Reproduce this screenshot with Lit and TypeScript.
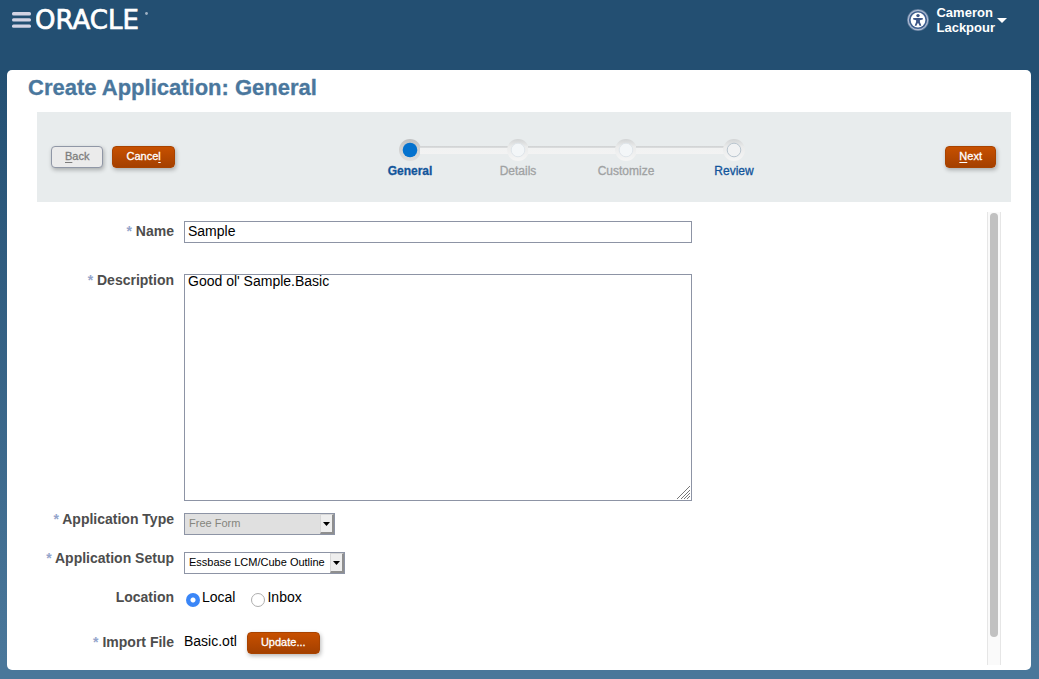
import { LitElement, html, css, svg, nothing } from "lit";
import { customElement, property } from "lit/decorators.js";

@customElement("train-step")
class TrainStep extends LitElement {
  static styles = css`
    :host {
      display: block;
      position: relative;
      width: 108px;
      text-align: center;
    }
    .line {
      position: absolute;
      top: 7px;
      left: 64px;
      width: 88px;
      height: 8px;
      background: linear-gradient(#cfd1d2, #dcdedf 25%, #f1f2f2 30%, #f3f3f3);
    }
    svg {
      display: block;
      margin: 0 auto;
    }
    .label {
      display: block;
      font-size: 12px;
      line-height: 16px;
      color: #a0a2a3;
      -webkit-text-stroke: 0.3px currentColor;
      text-decoration: none;
    }
    .current {
      color: #12559b;
      font-weight: bold;
    }
    .link {
      color: #12559b;
    }
  `;
  @property() label = "";
  @property() state = "off";
  @property({ type: Boolean }) last = false;

  render() {
    const on = this.state === "current";
    const open = this.state === "link";
    return html`
      ${this.last ? nothing : html`<div class="line"></div>`}
      <svg width="22" height="24" viewBox="0 0 22 24">
        <defs>
          <linearGradient id="ring" x1="0" y1="0" x2="0" y2="1">
            <stop offset="0" stop-color=${on ? "#bfc0c1" : "#d2d4d5"} />
            <stop offset="0.35" stop-color=${on ? "#cfcfcf" : "#eaebeb"} />
            <stop offset="1" stop-color=${on ? "#dedede" : "#f5f5f5"} />
          </linearGradient>
        </defs>
        <circle cx="11" cy="11" r="11" fill="url(#ring)" />
        ${on
          ? svg`<circle cx="11" cy="11" r="7.3" fill="#0572ce" />`
          : svg`<circle cx="11" cy="11" r="6.8" fill=${open ? "#f1f2f3" : "#f3f6f8"} stroke=${open ? "#b9c5cf" : "#dfe5ea"} />`}
      </svg>
      ${open
        ? html`<a class="label link" href="#review">${this.label}</a>`
        : html`<span class="label ${on ? "current" : ""}">${this.label}</span>`}
    `;
  }
}

@customElement("app-root")
class AppRoot extends LitElement {
  static styles = css`
    :host {
      display: flex;
      flex-direction: column;
      box-sizing: border-box;
      min-height: 100vh;
      padding: 0 8px 9px 7px;
      font-family: "Liberation Sans", Arial, sans-serif;
      font-size: 14px;
      line-height: 16px;
      color: #000;
      background: linear-gradient(#234f72 0, #234f72 70px, #4a779a 660px);
    }
    * {
      box-sizing: border-box;
    }
    header {
      display: flex;
      justify-content: space-between;
      height: 70px;
      padding: 5px 24px 0 5px;
    }
    .brand {
      display: flex;
      gap: 5px;
      height: 30px;
      align-items: center;
    }
    .plain {
      border: 0;
      padding: 0;
      background: none;
      color: #fff;
      font: inherit;
      display: flex;
      align-items: center;
    }
    .account {
      display: flex;
      height: 30px;
      gap: 6px;
      align-items: center;
    }
    .user {
      gap: 2px;
      font-size: 13px;
      font-weight: bold;
      line-height: 15px;
      text-align: left;
    }
    main {
      flex: 1;
      display: flex;
      flex-direction: column;
      background: #fff;
      border-radius: 5px;
      padding: 4px 20px 5px 21px;
    }
    h1 {
      margin: 0;
      font-size: 22px;
      line-height: 28px;
      color: #4a779d;
      -webkit-text-stroke: 0.3px currentColor;
    }
    .band {
      display: flex;
      justify-content: space-between;
      margin: 10px 0 0 9px;
      padding: 27px 15px 23px 14px;
      background: #e8eced;
    }
    .group {
      display: flex;
      gap: 9px;
    }
    .steps {
      display: flex;
      margin-left: 24px;
    }
    .btn {
      height: 22px;
      margin-top: 7px;
      padding: 0 13px 2px;
      border: 1px solid #a84300;
      border-radius: 4px;
      background: linear-gradient(#c75000, #a44000);
      box-shadow: 1px 2px 4px rgba(0, 0, 0, 0.28);
      color: #fff;
      font-family: inherit;
      font-size: 11px;
      line-height: 16px;
      -webkit-text-stroke: 0.3px currentColor;
    }
    .btn:disabled {
      border-color: #9097a6;
      background: #ebebeb;
      color: #7d7d7d;
    }
    .accel {
      text-decoration: underline;
      text-underline-offset: 2px;
    }
    .body {
      flex: 1;
      display: flex;
      justify-content: space-between;
      padding-top: 10px;
    }
    form {
      flex: 1;
      display: grid;
      grid-template-columns: 146px minmax(0, 508px);
      column-gap: 10px;
      align-content: start;
      padding-top: 9px;
    }
    .label {
      text-align: right;
      font-weight: bold;
      color: #4d4d4d;
      padding-top: 2px;
      white-space: nowrap;
    }
    .star {
      color: #94a5cb;
    }
    .text {
      display: block;
      width: 100%;
      border: 1px solid #8d94a5;
      border-radius: 0;
      padding: 0 3px 2px;
      margin: 0;
      font: inherit;
      color: #000;
      background: #fff;
      outline: none;
    }
    .line {
      height: 22px;
      margin-bottom: 31px;
    }
    .area {
      position: relative;
      margin-bottom: 12px;
    }
    textarea.text {
      height: 227px;
      line-height: 13px;
      resize: none;
    }
    .grip {
      position: absolute;
      right: 2px;
      bottom: 2px;
    }
    .pick {
      position: relative;
      justify-self: start;
      height: 22px;
      margin-bottom: 17px;
    }
    select {
      display: block;
      appearance: none;
      height: 22px;
      width: 161px;
      border: 1px solid #8d94a5;
      border-radius: 0;
      padding: 0 18px 2px 4px;
      margin: 0;
      background: #fff;
      color: #000;
      font-family: inherit;
      font-size: 11px;
      outline: none;
    }
    select:disabled {
      width: 151px;
      background: #e0e0e0;
      color: #85857d;
      opacity: 1;
    }
    .drop {
      position: absolute;
      top: 1px;
      right: 1px;
      width: 14px;
      height: 20px;
      border: 1px solid;
      border-width: 1px 2px 2px 1px;
      border-color: #d8d8d8 #8f8f8f #8f8f8f #d8d8d8;
      background: #eee;
      display: flex;
      align-items: center;
      justify-content: center;
      pointer-events: none;
    }
    .radios {
      display: flex;
      gap: 14px;
      height: 20px;
      margin-bottom: 21px;
    }
    .radio {
      display: flex;
      gap: 2px;
      margin-top: -2px;
    }
    .radio input {
      appearance: none;
      width: 14px;
      height: 14px;
      margin: 4px 0 0 2px;
      border: 1px solid #aeaeae;
      border-radius: 50%;
      background: #fff;
    }
    .radio input:checked {
      border: 0;
      background: radial-gradient(circle, #fff 2px, #3a86f7 3px);
    }
    .file span {
      padding-top: 1px;
    }
    .up {
      padding-top: 0;
      margin-top: -2px;
    }
    .file {
      display: flex;
      gap: 10px;
    }
    .file .btn {
      margin-top: 0;
    }
    .rail {
      width: 14px;
      margin-right: 10px;
      border: 1px solid #e6e6e6;
      border-width: 0 1px;
      background: #fafafa;
      padding: 1px 2px 28px;
      display: flex;
    }
    .thumb {
      width: 8px;
      border-radius: 4px;
      background: #c1c1c1;
    }
  `;

  private arrow = () => html`<span class="drop"
    ><svg width="7" height="4" viewBox="0 0 7 4"><path d="M0 0H7L3.5 4Z" fill="#000" /></svg
  ></span>`;

  private star = () => html`<span class="star">*</span>`;

  render() {
    return html`
      <header>
        <div class="brand">
          <button class="plain" aria-label="Menu">
            <svg width="19" height="16" viewBox="0 0 19 16" fill="#d3d4e4">
              <rect width="19" height="3.4" rx="1.5" />
              <rect y="6.2" width="19" height="3.4" rx="1.5" />
              <rect y="12.4" width="19" height="3.4" rx="1.5" />
            </svg>
          </button>
          <svg width="116" height="32" viewBox="0 0 116 32" fill="#fff" font-family="DejaVu Sans, sans-serif">
            <text x="-1" y="25" font-size="26" stroke="#fff" stroke-width="0.7">ORACLE</text>
            <circle cx="110.5" cy="9.5" r="1.4" fill="#9fb2c4" />
          </svg>
        </div>
        <div class="account">
          <button class="plain" aria-label="Accessibility">
            <svg width="24" height="24" viewBox="0 0 24 24">
              <circle cx="12" cy="12" r="11" fill="#8b9dbb" opacity="0.6" />
              <circle cx="12" cy="12" r="9.7" fill="#3f5f8f" stroke="#aebbd2" stroke-width="1.2" />
              <circle cx="12" cy="12" r="7.4" fill="#fff" />
              <circle cx="12" cy="7.6" r="1.7" fill="#3d5687" />
              <path
                d="M7.2 10H16.8V11.5L13.9 12.2V14L15.3 17.5L13.8 18L12 14.8L10.2 18L8.7 17.5L10.1 14V12.2L7.2 11.5Z"
                fill="#3d5687"
              />
            </svg>
          </button>
          <button class="plain user">
            <span>Cameron<br />Lackpour</span>
            <svg width="10" height="5" viewBox="0 0 10 5"><path d="M0 0H10L5 5Z" fill="#fff" /></svg>
          </button>
        </div>
      </header>
      <main>
        <h1>Create Application: General</h1>
        <div class="band">
          <div class="group">
            <button class="btn" disabled><span class="accel">B</span>ack</button>
            <button class="btn">Cance<span class="accel">l</span></button>
          </div>
          <div class="steps">
            <train-step label="General" state="current"></train-step>
            <train-step label="Details"></train-step>
            <train-step label="Customize"></train-step>
            <train-step label="Review" state="link" last></train-step>
          </div>
          <div class="group">
            <button class="btn"><span class="accel">N</span>ext</button>
          </div>
        </div>
        <div class="body">
          <form>
            <label class="label" for="name">${this.star()} Name</label>
            <input class="text line" id="name" .value=${"Sample"} />
            <label class="label up" for="desc">${this.star()} Description</label>
            <div class="area">
              <textarea class="text" id="desc" .value=${"Good ol' Sample.Basic"}></textarea>
              <svg class="grip" width="13" height="13" viewBox="0 0 13 13" stroke="#777" stroke-width="1">
                <path d="M0 13L13 0M4 13L13 4M7 13L13 7M10 13L13 10" />
              </svg>
            </div>
            <label class="label up" for="type">${this.star()} Application Type</label>
            <div class="pick">
              <select id="type" disabled>
                <option>Free Form</option>
              </select>
              ${this.arrow()}
            </div>
            <label class="label up" for="setup">${this.star()} Application Setup</label>
            <div class="pick">
              <select id="setup">
                <option>Essbase LCM/Cube Outline</option>
              </select>
              ${this.arrow()}
            </div>
            <div class="label up" id="loc">Location</div>
            <div class="radios" role="radiogroup" aria-labelledby="loc">
              <label class="radio"><input type="radio" name="location" checked /><span>Local</span></label>
              <label class="radio"><input type="radio" name="location" /><span>Inbox</span></label>
            </div>
            <div class="label">${this.star()} Import File</div>
            <div class="file">
              <span>Basic.otl</span>
              <button class="btn" type="button">Update...</button>
            </div>
          </form>
          <div class="rail"><div class="thumb"></div></div>
        </div>
      </main>
    `;
  }
}
